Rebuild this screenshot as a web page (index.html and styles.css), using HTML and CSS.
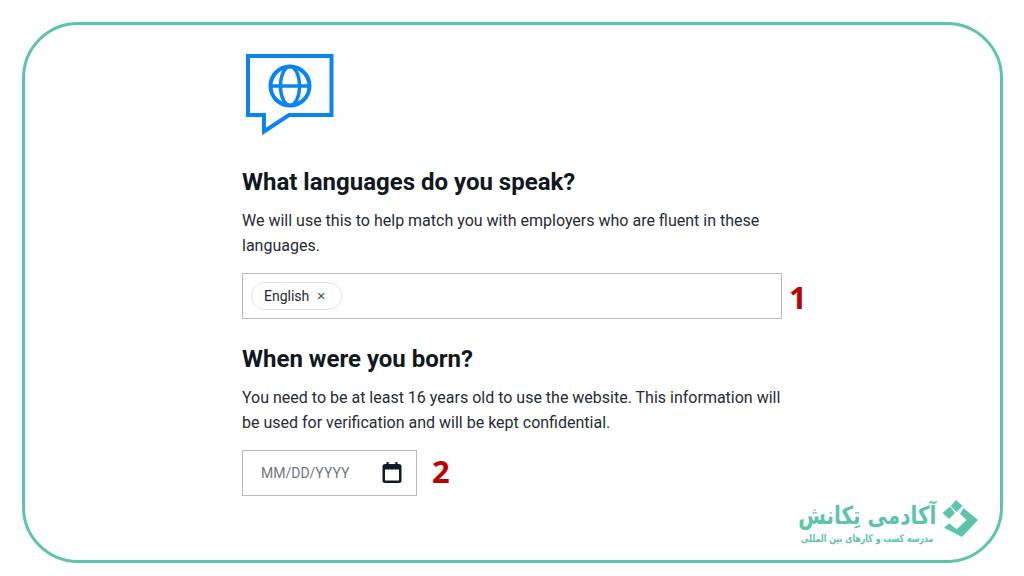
FILE: index.html
```html
<!DOCTYPE html>
<html lang="en">
<head>
    <meta charset="UTF-8">
    <meta name="viewport" content="width=device-width, initial-scale=1.0">
    <title>Languages</title>
    <link rel="stylesheet" href="styles.css">
</head>
<body>
    <div class="frame">
        <div class="content">
            <svg class="speech-icon" width="90" height="82" viewBox="0 0 90 82" fill="none" stroke="#0885f0">
                <path d="M3 2H86.500V61H44L19 77.500V61H3Z" stroke-width="4"/>
                <circle cx="45" cy="32" r="19.500" stroke-width="4"/>
                <ellipse cx="45" cy="32" rx="9.500" ry="19.500" stroke-width="3.500"/>
                <path d="M25 32H65" stroke-width="3.500"/>
            </svg>

            <h2 class="first">What languages do you speak?</h2>
            <p>We will use this to help match you with employers who are fluent in these languages.</p>
            <div class="row">
                <div class="tag-input">
                    <span class="tag">English <span class="tag-x">×</span></span>
                </div>
                <span class="mark mark-one">1</span>
            </div>

            <h2>When were you born?</h2>
            <p>You need to be at least 16 years old to use the website. This information will be used for verification and will be kept confidential.</p>
            <div class="row">
                <div class="date-input">
                    <span class="placeholder">MM/DD/YYYY</span>
                    <svg width="24" height="24" viewBox="0 0 24 24" fill="#111b27">
                        <path d="M6.500 1h2.200v2h6.600V1h2.200v2H19a2.500 2.500 0 0 1 2.500 2.500v14A2.500 2.500 0 0 1 19 22H5a2.500 2.500 0 0 1-2.500-2.500v-14A2.500 2.500 0 0 1 5 3h1.500V1ZM5 8.500v11h14v-11H5Z"/>
                    </svg>
                </div>
                <span class="mark mark-two">2</span>
            </div>
        </div>

        <div class="logo">
            <div class="logo-text">
                <div class="logo-name" dir="rtl">آکادمی تِکانش</div>
                <div class="logo-sub" dir="rtl">مدرسه کسب و کارهای بین المللی</div>
            </div>
            <svg class="logo-mark" width="37" height="38" viewBox="0 0 37 38" fill="#5cc4ab">
                <path d="M14 0L20.500 6L14.500 12L8.700 6Z"/>
                <path d="M8 6.500L13 13L7 19L0.500 13Z"/>
                <path d="M21.500 8L36 20L20 37L2 27.700L7 23.300L14.700 29.300L24.700 20L18 14Z"/>
            </svg>
        </div>
    </div>
</body>
</html>
```

FILE: styles.css
```css
* {
    box-sizing: border-box;
}

body {
    margin: 0;
    padding: 22px;
    height: 576px;
    overflow: hidden;
    background-color: #fff;
    color: #262c34;
    font-family: Roboto, 'Liberation Sans', sans-serif;
}

.frame {
    position: relative;
    width: 981px;
    height: 541px;
    border: 3px solid #5cc4ab;
    border-radius: 56px;
    padding: 29px 0 0 217px;
}

.content {
    width: 570px;
}

.speech-icon {
    display: block;
    margin-left: 3px;
}

h2 {
    margin: 24px 0 0;
    font-size: 24px;
    line-height: 32px;
    font-weight: 700;
    color: #111820;
}

h2.first {
    margin-top: 30px;
}

p {
    width: 540px;
    margin: 11px 0 0;
    font-size: 16px;
    line-height: 24.5px;
}

.row {
    display: flex;
    align-items: center;
    margin-top: 15px;
}

.tag-input {
    display: flex;
    align-items: center;
    width: 540px;
    height: 46px;
    padding-left: 8px;
    border: 1px solid #b9b9b9;
}

.tag {
    height: 28px;
    padding: 0 15px 0 12px;
    border: 1px solid #e2e2e2;
    border-radius: 14px;
    font-size: 14px;
    line-height: 25px;
}

.tag-x {
    margin-left: 4px;
    font-family: 'Liberation Sans', sans-serif;
    font-size: 15px;
    font-weight: 400;
    color: #444a52;
}

.date-input {
    display: flex;
    align-items: center;
    justify-content: space-between;
    width: 175px;
    height: 46px;
    padding: 0 12px 0 18px;
    border: 1px solid #b9b9b9;
}

.placeholder {
    font-size: 14px;
    color: #6f7780;
}

.mark {
    font-family: 'Open Sans', sans-serif;
    font-size: 31px;
    font-weight: 700;
    color: #c00000;
}

.mark-one {
    margin-left: 7px;
    margin-top: 2px;
}

.mark-two {
    margin-left: 15px;
    margin-top: -4px;
}

.logo {
    position: absolute;
    right: 21px;
    top: 474px;
    display: flex;
    align-items: flex-start;
    gap: 6px;
    color: #5cc4ab;
}

.logo-mark {
    margin-top: 1px;
}

.logo-text {
    text-align: right;
    font-family: 'DejaVu Sans', sans-serif;
    font-weight: 700;
}

.logo-name {
    font-size: 25px;
    line-height: 33px;
    white-space: nowrap;
    transform: scaleX(0.8);
    transform-origin: right center;
}

.logo-sub {
    margin-right: 3px;
    font-size: 10.5px;
    line-height: 13px;
    white-space: nowrap;
    transform: scaleX(0.75);
    transform-origin: right center;
}
```
